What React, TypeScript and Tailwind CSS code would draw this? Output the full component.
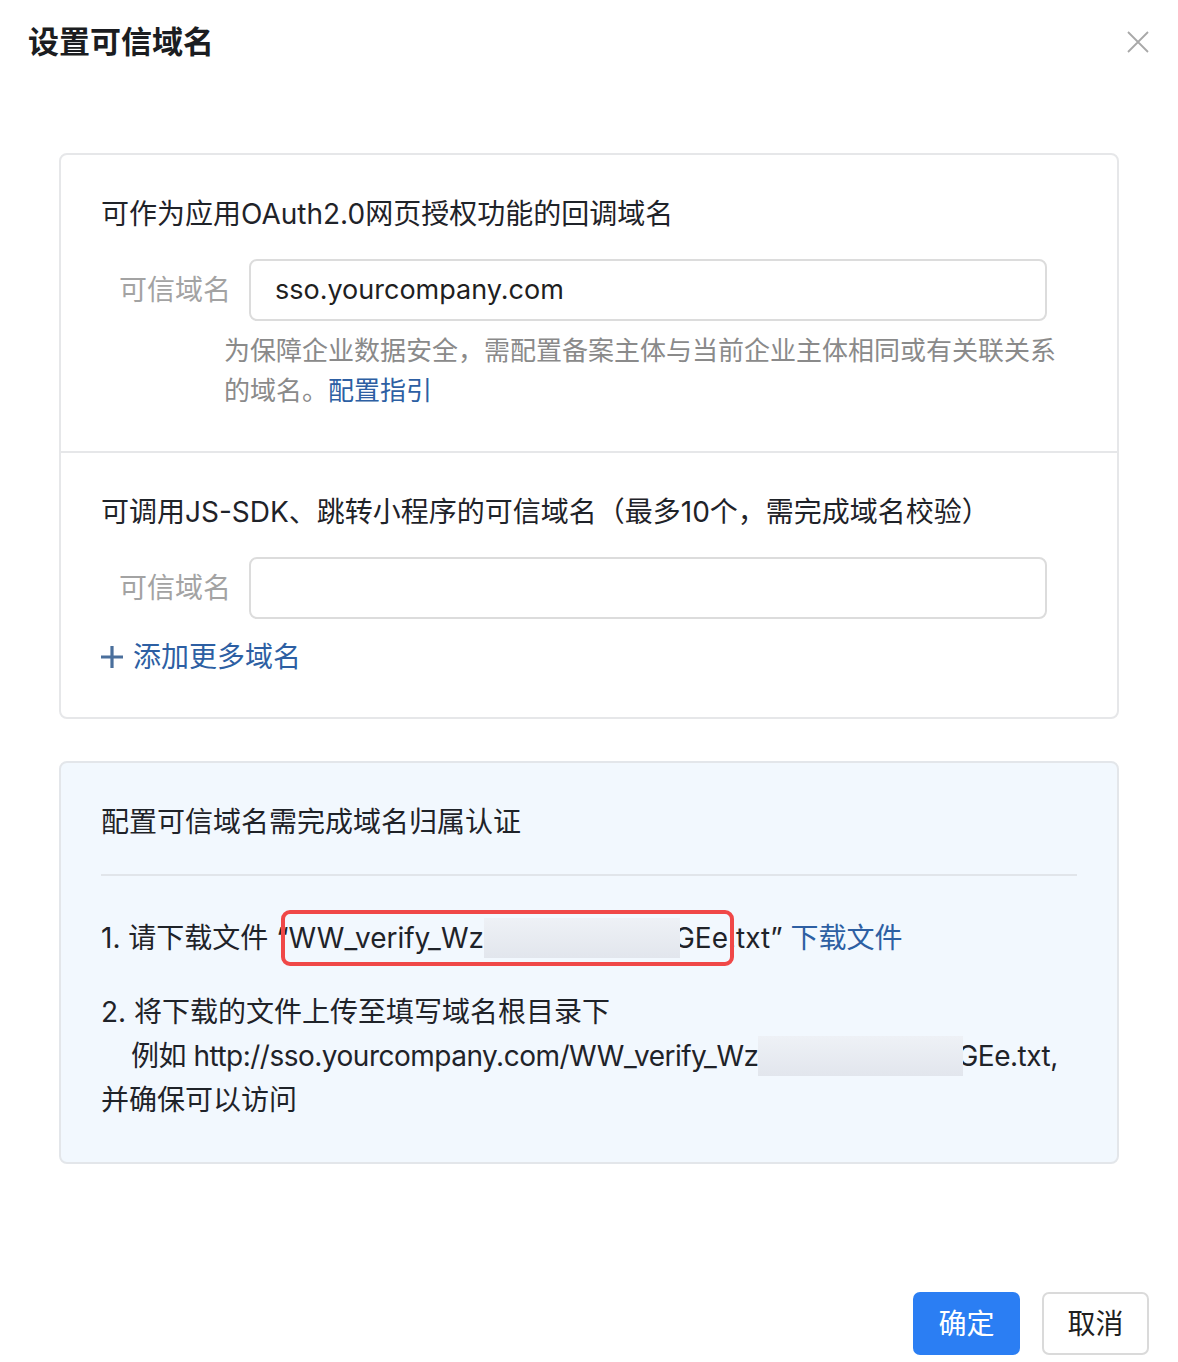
import React from 'react';

const font = 'font-["Inter","Noto_Sans_CJK_SC",sans-serif]';

const Masked: React.FC<{ w: string }> = ({ w }) => (
  <span
    className={`inline-block ${w} h-[40px] align-middle bg-gradient-to-b from-[#eef1f6] to-[#e2e6ed] relative z-10 -mr-[6px] -mt-[4px]`}
  />
);

const DomainRow: React.FC<{ value?: string }> = ({ value }) => (
  <div className="flex items-center">
    <div className="w-[130px] text-right text-[28px] text-[#a3a3a3] leading-none shrink-0">可信域名</div>
    <div className="ml-[18px] w-[798px] h-[62px] border-2 border-[#dcdcdc] rounded-[8px] bg-white flex items-center px-[24px] text-[27px] text-[#1f1f1f]">
      {value}
    </div>
  </div>
);

export default function App() {
  return (
    <div className={`${font} w-[1178px] h-[1362px] bg-white relative text-[#1f2329]`}>
      <div className="flex items-start justify-between pl-[28px] pr-[28px] pt-[22px]">
        <h1 className="text-[31px] font-semibold leading-[40px] text-[#1b1d21]">设置可信域名</h1>
        <button className="mt-[8px] w-[24px] h-[24px] text-[#a8a8a8]">
          <svg viewBox="0 0 24 24" width="24" height="24" fill="none" stroke="currentColor" strokeWidth="1.8">
            <path d="M2 2L22 22M22 2L2 22" />
          </svg>
        </button>
      </div>

      <div className="mx-[59px] mt-[91px] border-2 border-[#e6e7e9] rounded-[8px]">
        <div className="px-[40px] pt-[41px] pb-[40px] border-b-2 border-[#e6e7e9]">
          <div className="text-[28px] leading-[36px]">可作为应用OAuth2.0网页授权功能的回调域名</div>
          <div className="mt-[27px]">
            <DomainRow value="sso.yourcompany.com" />
          </div>
          <div className="mt-[10px] ml-[123px] w-[845px] text-[26px] leading-[40px] text-[#8a8a8a]">
            为保障企业数据安全，需配置备案主体与当前企业主体相同或有关联关系的域名。
            <span className="text-[#2d5fa3]">配置指引</span>
          </div>
        </div>
        <div className="px-[40px] pt-[41px] pb-[42px]">
          <div className="text-[28px] leading-[36px]">可调用JS-SDK、跳转小程序的可信域名（最多10个，需完成域名校验）</div>
          <div className="mt-[27px]">
            <DomainRow />
          </div>
          <div className="mt-[20px] flex items-center text-[28px] leading-[36px] text-[#2d5fa3]">
            <svg viewBox="0 0 22 22" width="22" height="22" className="text-[#4a6f9c]">
              <path d="M11 0V22M0 11H22" stroke="currentColor" strokeWidth="3.2" />
            </svg>
            <span className="ml-[10px]">添加更多域名</span>
          </div>
        </div>
      </div>

      <div className="mx-[59px] mt-[42px] border-2 border-[#e3e6ea] rounded-[8px] bg-[#f2f8fe] px-[40px] pt-[41px] pb-[40px] text-[28px]">
        <div className="leading-[36px]">配置可信域名需完成域名归属认证</div>
        <div className="mt-[34px] border-t-2 border-[#e1e5ea]" />
        <div className="mt-[40px] leading-[44px] whitespace-nowrap">
          1. 请下载文件 “
          <span className="relative">
            WW_verify_Wz<Masked w="w-[196px]" />GEe.
            <span className="absolute -left-[8px] right-[2px] top-1/2 -translate-y-1/2 h-[56px] border-[4px] border-[#f04848] rounded-[9px] z-20" />
          </span>
          txt” <span className="text-[#2d5fa3]">下载文件</span>
        </div>
        <div className="mt-[30px] leading-[44px]">
          <div>2. 将下载的文件上传至填写域名根目录下</div>
          <div className="pl-[30px] whitespace-nowrap tracking-[-0.5px]">
            例如 http://sso.yourcompany.com/WW_verify_Wz<Masked w="w-[205px]" />GEe.txt,
          </div>
          <div>并确保可以访问</div>
        </div>
      </div>

      <div className="absolute right-[29px] top-[1292px] flex gap-[22px]">
        <button className="w-[107px] h-[63px] rounded-[7px] bg-[#2b7ef3] text-white text-[28px]">确定</button>
        <button className="w-[107px] h-[63px] rounded-[7px] border-2 border-[#dadada] bg-white text-[#1f1f1f] text-[28px]">取消</button>
      </div>
    </div>
  );
}
